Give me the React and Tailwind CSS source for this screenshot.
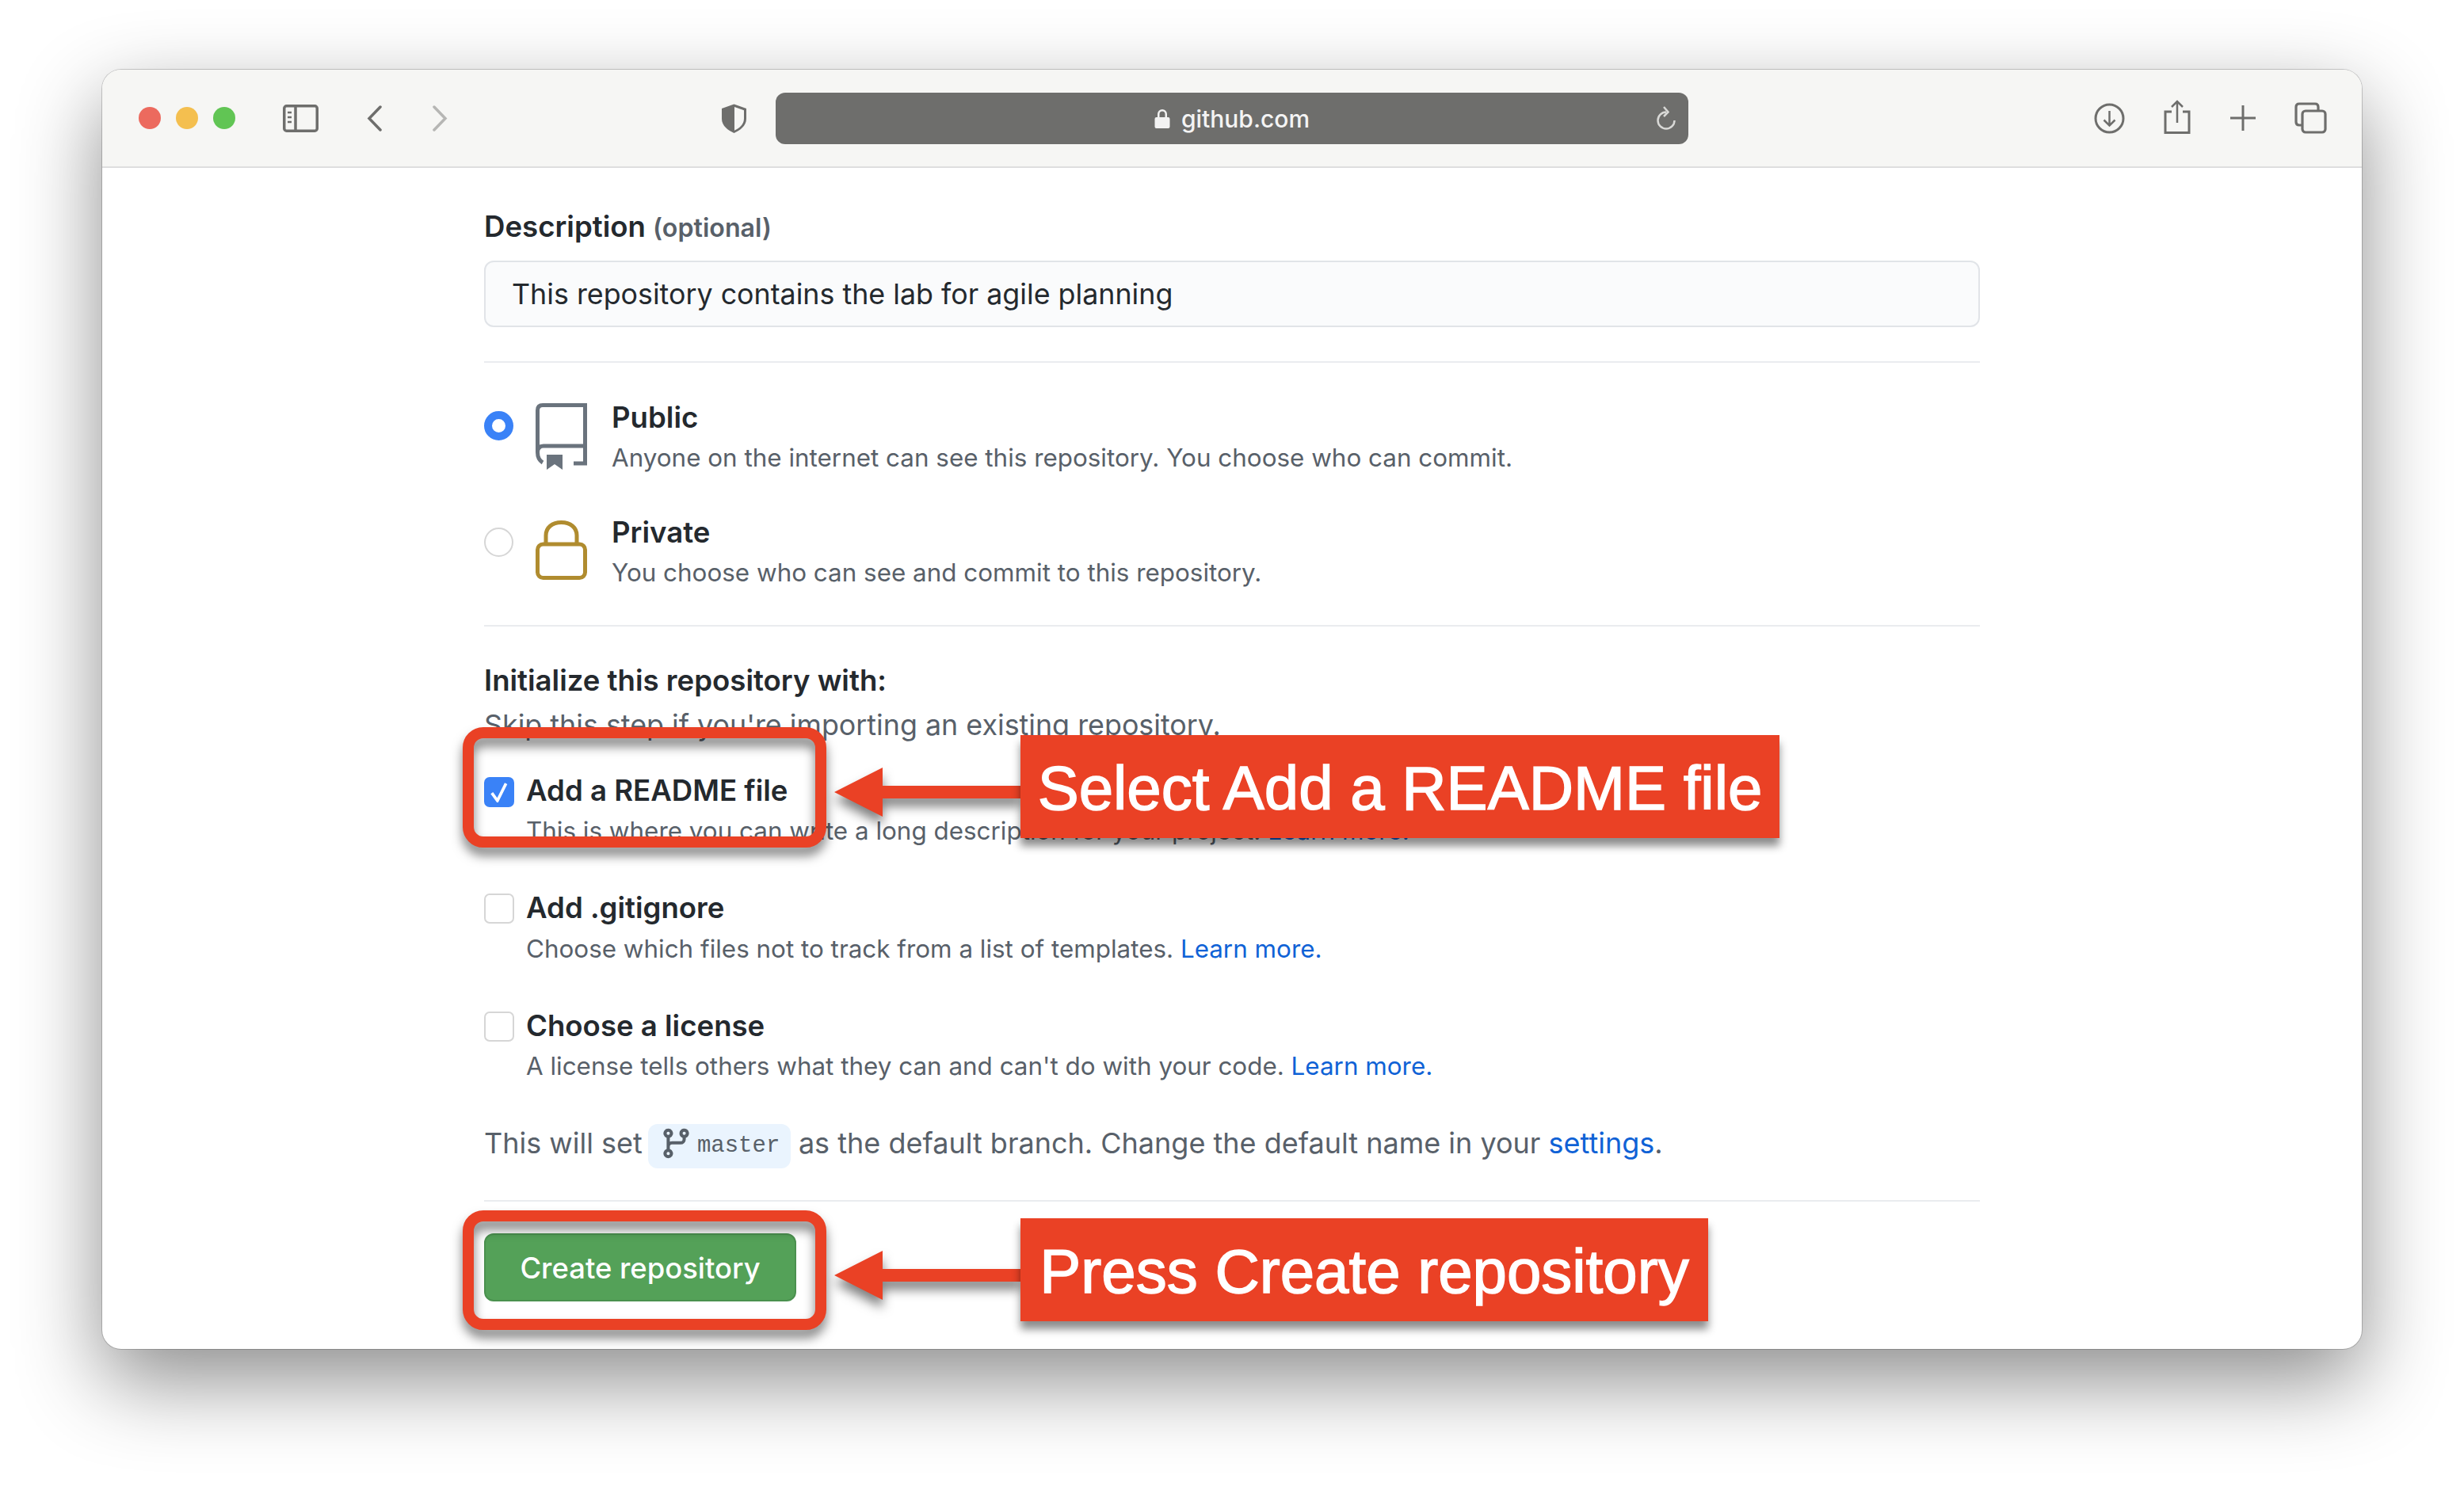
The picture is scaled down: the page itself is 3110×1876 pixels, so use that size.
const Title = ({ children, className = '' }) => (
  <p className={`h-[44px] text-[36.6px] leading-[44px] font-semibold text-[#24292e] ${className}`}>{children}</p>
)

const Desc = ({ children, className = '' }) => (
  <p className={`h-[44px] text-[31.4px] leading-[44px] text-[#586069] whitespace-nowrap ${className}`}>{children}</p>
)

const Learn = ({ children = 'Learn more.' }) => <span className="text-[#0f62d6]">{children}</span>

function Radio({ checked, className = '' }) {
  return checked ? (
    <span className={`block h-[37px] w-[37px] shrink-0 rounded-full border-[10px] border-[#3a82f7] bg-white ${className}`} />
  ) : (
    <span className={`block h-[37px] w-[37px] shrink-0 rounded-full border-2 border-[#d6d6d6] bg-white ${className}`} />
  )
}

function Checkbox({ checked }) {
  return checked ? (
    <span className="mt-[5px] flex h-[38px] w-[38px] shrink-0 items-center justify-center rounded-[7px] bg-[#3a82f7]">
      <svg width="26" height="26" viewBox="0 0 24 24" fill="none" stroke="#fff" strokeWidth="3.4">
        <path d="M3.5 13L10 22L20 2" />
      </svg>
    </span>
  ) : (
    <span className="mt-[4px] block h-[38px] w-[38px] shrink-0 rounded-[7px] border-2 border-[#d6d6d6] bg-white" />
  )
}

const RepoIcon = () => (
  <svg className="ml-[28px] mt-[4px] shrink-0" width="65" height="84" viewBox="0 0 65 84" fill="none" stroke="#6a737d" strokeWidth="5">
    <path d="M2.5 62V9Q2.5 2.5 9 2.5H62.5V76H48" />
    <path d="M2.5 62Q2.5 54 10 54H62.5" />
    <path d="M2.5 62Q2.5 71 9 75" />
    <path d="M14 65H34V84L24 77L14 84Z" fill="#6a737d" stroke="none" />
  </svg>
)

const LockIcon = () => (
  <svg className="ml-[28px] mt-[8px] shrink-0" width="65" height="75" viewBox="0 0 65 75" fill="none" stroke="#b08c2f" strokeWidth="5">
    <rect x="2.5" y="30" width="60" height="42.5" rx="7" />
    <path d="M13 30V19C13 9 21 2.5 32.5 2.5S52 9 52 19V30" />
  </svg>
)

const BranchIcon = () => (
  <svg className="mb-[8px] shrink-0" width="43" height="43" viewBox="0 0 16 16" fill="#586069">
    <path
      fillRule="evenodd"
      d="M11.75 2.5a.75.75 0 100 1.5.75.75 0 000-1.5zm-2.25.75a2.25 2.25 0 113 2.122V6A2.5 2.5 0 0110 8.5H6a1 1 0 00-1 1v1.128a2.251 2.251 0 11-1.5 0V5.372a2.25 2.25 0 111.5 0v1.836A2.492 2.492 0 016 7h4a1 1 0 001-1v-.628A2.25 2.25 0 019.5 3.25zM4.25 12a.75.75 0 100 1.5.75.75 0 000-1.5zM3.5 3.25a.75.75 0 111.5 0 .75.75 0 01-1.5 0z"
    />
  </svg>
)

function Toolbar() {
  return (
    <div className="flex h-[124px] shrink-0 items-center border-b-2 border-[#dedede] bg-[#f6f6f4] pl-[46px] pr-[44px]">
      <div className="flex gap-[19px]">
        <span className="h-[28px] w-[28px] rounded-full bg-[#ec6a5e]" />
        <span className="h-[28px] w-[28px] rounded-full bg-[#f4bf4f]" />
        <span className="h-[28px] w-[28px] rounded-full bg-[#61c554]" />
      </div>

      <svg className="ml-[60px]" width="45" height="35" viewBox="0 0 45 35" fill="none" stroke="#6e6e6c" strokeWidth="3.5">
        <rect x="1.75" y="1.75" width="41.5" height="31.5" rx="3" />
        <path d="M16 2V33" />
        <path d="M6 10H11M6 16H11M6 22H11" strokeWidth="2.5" />
      </svg>
      <svg className="ml-[61px]" width="19" height="33" viewBox="0 0 19 33" fill="none" stroke="#6e6e6c" strokeWidth="3.5" strokeLinecap="round">
        <path d="M17 2L3 16.5L17 31" />
      </svg>
      <svg className="ml-[64px]" width="19" height="33" viewBox="0 0 19 33" fill="none" stroke="#b6b6b4" strokeWidth="3.5" strokeLinecap="round">
        <path d="M2 2L16 16.5L2 31" />
      </svg>

      <svg className="ml-[345px]" width="33" height="39" viewBox="0 0 33 39">
        <path d="M16.5 1.5L32 7V20C32 29 24 34.5 16.5 38C9 34.5 1 29 1 20V7Z" fill="#6e6e6c" />
        <path d="M17 5L29 9.2V20C29 27 23 31.8 17 34.8Z" fill="#f6f6f4" />
      </svg>

      <div className="relative ml-[36px] flex h-[65px] w-[1152px] items-center justify-center gap-[14px] rounded-[12px] bg-[#6e6e6c]">
        <svg className="mt-[2px]" width="20" height="26" viewBox="0 0 20 26" fill="#f2f2f2">
          <path d="M2.5 11H4V7a6 6 0 0112 0v4h1.5a2 2 0 012 2v10a2 2 0 01-2 2h-15a2 2 0 01-2-2V13a2 2 0 012-2zM6.5 11h7V7a3.5 3.5 0 00-7 0z" />
        </svg>
        <span className="mt-[2px] text-[30px] leading-[40px] font-medium text-[#f4f4f4]">github.com</span>
        <svg className="absolute right-[15px] top-[17px]" width="26" height="31" viewBox="0 0 26 31" fill="none" stroke="#d8d8d6" strokeWidth="2.5">
          <path d="M13 7.5A10.5 10.5 0 1 0 23.5 18" />
          <path d="M10 1L15.5 7.5L10 13" />
        </svg>
      </div>

      <div className="ml-auto flex items-center">
        <svg width="39" height="39" viewBox="0 0 39 39" fill="none" stroke="#6e6e6c" strokeWidth="3">
          <circle cx="19.5" cy="19.5" r="17.5" />
          <path d="M19.5 10V28M12.5 21.5L19.5 28.5L26.5 21.5" strokeWidth="2.5" />
        </svg>
        <svg className="ml-[49px] mb-[4px]" width="34" height="43" viewBox="0 0 34 43" fill="none" stroke="#6e6e6c" strokeWidth="3">
          <path d="M10 15H2V41.5H32V15H24" />
          <path d="M17 2V29M10 9L17 2L24 9" strokeWidth="2.5" />
        </svg>
        <svg className="ml-[50px]" width="32" height="32" viewBox="0 0 32 32" fill="none" stroke="#6e6e6c" strokeWidth="3">
          <path d="M16 0V32M0 16H32" />
        </svg>
        <svg className="ml-[49px]" width="41" height="40" viewBox="0 0 41 40" fill="none" stroke="#6e6e6c" strokeWidth="3.2">
          <path d="M10 29H6Q2 29 2 25V6Q2 2 6 2H26Q30 2 30 6V10" />
          <rect x="10" y="11" width="29" height="27" rx="4" />
        </svg>
      </div>
    </div>
  )
}

const ArrowLeft = ({ className }) => (
  <svg className={`absolute drop-shadow-[0_10px_7px_rgba(0,0,0,0.5)] ${className}`} width="236" height="62" viewBox="0 0 236 62" fill="#ea4125">
    <path d="M0 31L61 0V23H236V39H61V62Z" />
  </svg>
)

const Ring = ({ className }) => (
  <div className={`absolute w-[459px] rounded-[26px] border-[14px] border-[#ea4125] drop-shadow-[0_10px_7px_rgba(0,0,0,0.5)] ${className}`} />
)

const Label = ({ children, className }) => (
  <div className={`absolute flex h-[130px] items-center justify-center bg-[#ea4125] pt-[4px] font-['Liberation_Sans',Arial,sans-serif] text-[78px] whitespace-nowrap text-white [-webkit-text-stroke:1.5px_#fff] shadow-[0_10px_10px_rgba(0,0,0,0.45)] ${className}`}>
    {children}
  </div>
)

export default function App() {
  return (
    <div className="h-[1876px] w-[3110px] overflow-hidden bg-white pl-[129px] pt-[88px] font-['Inter',sans-serif]">
      <div className="relative flex h-[1615px] w-[2852px] flex-col overflow-hidden rounded-[24px] bg-white shadow-[0_0_0_1px_rgba(0,0,0,0.18),0_40px_105px_rgba(0,0,0,0.45)]">
        <Toolbar />

        <div className="flex w-[2370px] flex-col pl-[482px]">
          <p className="mt-[52px] h-[44px] text-[36.6px] leading-[44px] font-semibold text-[#24292e]">
            Description <span className="text-[32.2px] text-[#586069]">(optional)</span>
          </p>
          <div className="mt-[21px] flex h-[84px] items-center rounded-[12px] border-2 border-[#e1e4e8] bg-[#fafbfc] pl-[33px] pt-[2px] text-[35.8px] text-[#24292e]">
            This repository contains the lab for agile planning
          </div>
          <div className="mt-[43px] h-[2px] bg-[#eaecef]" />

          <div className="mt-[47px] flex">
            <Radio checked className="mt-[14px]" />
            <RepoIcon />
            <div className="ml-[31px]">
              <Title>Public</Title>
              <Desc className="mt-[7px]">Anyone on the internet can see this repository. You choose who can commit.</Desc>
            </div>
          </div>
          <div className="mt-[49px] flex">
            <Radio className="mt-[17px]" />
            <LockIcon />
            <div className="ml-[31px]">
              <Title className="mt-[1px]">Private</Title>
              <Desc className="mt-[7px]">You choose who can see and commit to this repository.</Desc>
            </div>
          </div>
          <div className="mt-[44px] h-[2px] bg-[#eaecef]" />

          <Title className="mt-[46px]">Initialize this repository with:</Title>
          <p className="mt-[12px] h-[44px] text-[35.85px] leading-[44px] text-[#586069]">Skip this step if you're importing an existing repository.</p>

          <div className="mt-[39px] flex gap-[15px]">
            <Checkbox checked />
            <div>
              <Title>Add a README file</Title>
              <Desc className="mt-[7px]">This is where you can write a long description for your project. <Learn /></Desc>
            </div>
          </div>
          <div className="mt-[53px] flex gap-[15px]">
            <Checkbox />
            <div>
              <Title>Add .gitignore</Title>
              <Desc className="mt-[8px]">Choose which files not to track from a list of templates. <Learn /></Desc>
            </div>
          </div>
          <div className="mt-[53px] flex gap-[15px]">
            <Checkbox />
            <div>
              <Title>Choose a license</Title>
              <Desc className="mt-[7px]">A license tells others what they can and can't do with your code. <Learn /></Desc>
            </div>
          </div>

          <div className="mt-[53px] flex h-[44px] items-center text-[36px] whitespace-nowrap text-[#586069]">
            This will set
            <span className="ml-[7px] mr-[10px] mt-[8px] flex h-[56px] w-[180px] items-center rounded-[12px] bg-[#eaf4fe] pl-[14px]">
              <BranchIcon />
              <span className="ml-[5px] font-['Liberation_Mono',monospace] text-[29px] text-[#586069]">master</span>
            </span>
            as the default branch. Change the default name in your&nbsp;<Learn>settings</Learn>.
          </div>
          <div className="mt-[50px] h-[2px] bg-[#eaecef]" />

          <button className="mt-[40px] h-[86px] w-[394px] rounded-[12px] border-2 border-[#4b914f] bg-[#54a158] pt-[2px] text-[36.4px] font-medium text-white">
            Create repository
          </button>
        </div>

        <Ring className="left-[455px] top-[830px] h-[152px]" />
        <ArrowLeft className="left-[924px] top-[881px]" />
        <Label className="left-[1159px] top-[840px] w-[958px]">Select Add a README file</Label>

        <Ring className="left-[455px] top-[1440px] h-[151px]" />
        <ArrowLeft className="left-[924px] top-[1491px]" />
        <Label className="left-[1159px] top-[1450px] w-[868px]">Press Create repository</Label>
      </div>
    </div>
  )
}
